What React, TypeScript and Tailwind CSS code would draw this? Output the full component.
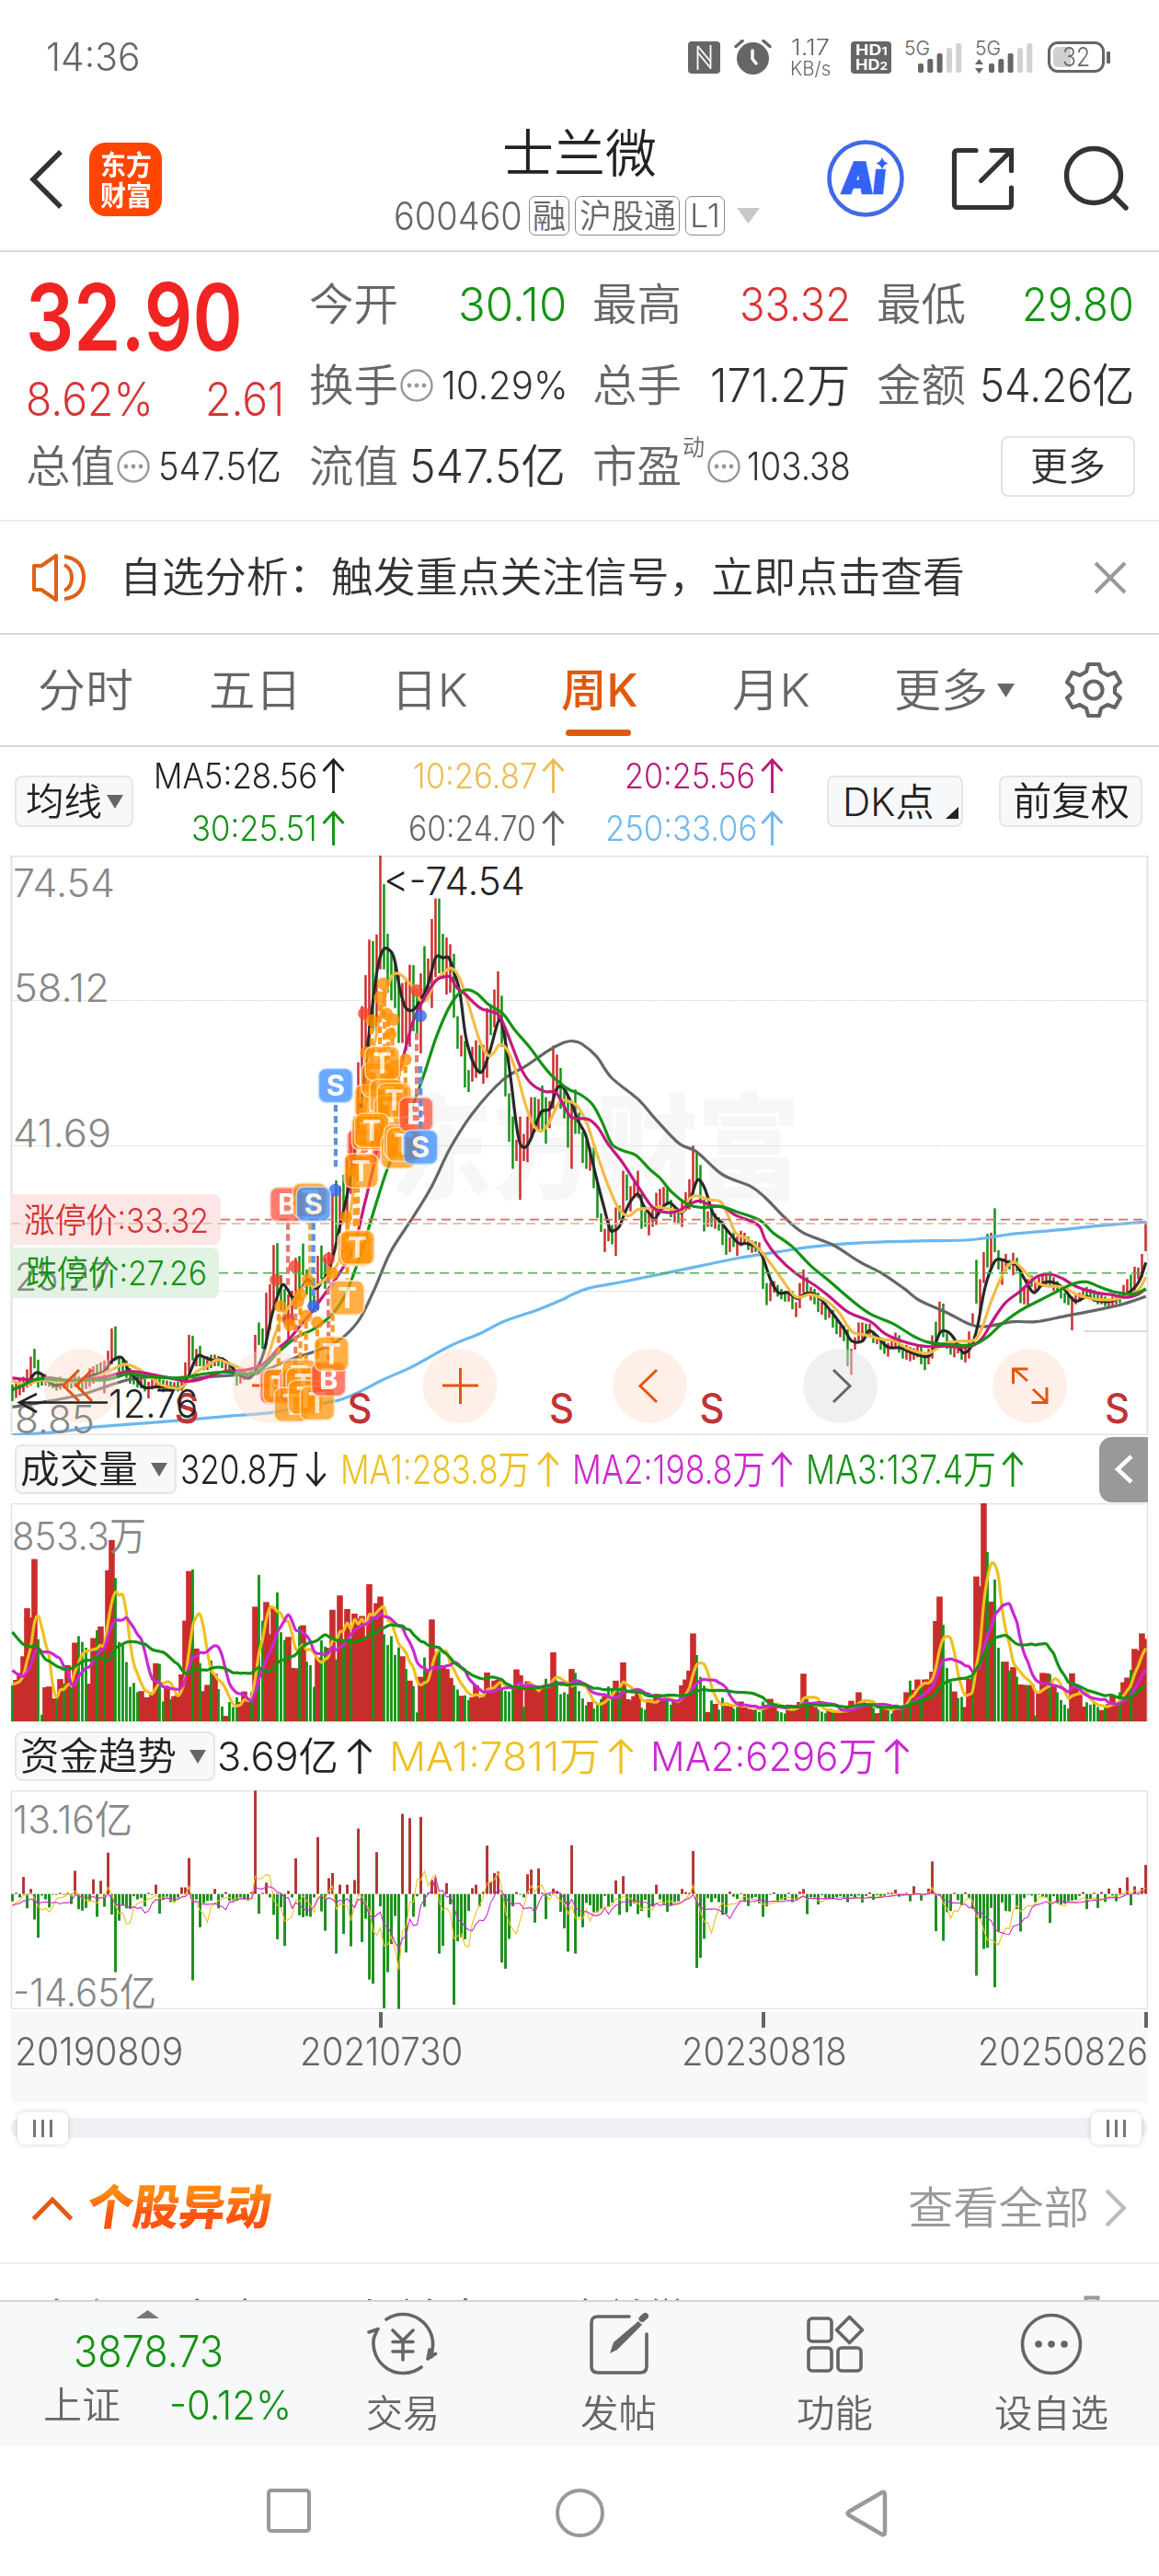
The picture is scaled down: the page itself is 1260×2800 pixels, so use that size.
import { useLayoutEffect, useRef } from "react";
import type { ReactNode } from "react";

const RED = "#cc2f2d";
const GREEN = "#149314";

/* Text squeezed or stretched horizontally so that it fills its box exactly. */
function Fit({ children, className = "", inkClass = "" }: { children: ReactNode; className?: string; inkClass?: string }) {
  const box = useRef<HTMLSpanElement>(null);
  const ink = useRef<HTMLSpanElement>(null);
  useLayoutEffect(() => {
    if (!box.current || !ink.current) return;
    const natural = ink.current.offsetWidth;
    if (natural > 0) ink.current.style.transform = `scaleX(${box.current.clientWidth / natural})`;
  });
  return (
    <span ref={box} className={"block shrink-0 leading-none whitespace-nowrap " + className}>
      <span ref={ink} className={"inline-block origin-left " + inkClass}>
        {children}
      </span>
    </span>
  );
}

/* ---------- chart data ---------- */

const VOLUME =
  "-672 658 640 597 473 497 346 -553 -748 677 675 706 -706 656 -668 620 -677 562 -545 -560 -575 668 550 -530 520 -570 375 297 -395 -560 -568 -612 -676 -666 -690 687 703 703 690 615 -617 -714 677 -708 700 697 644 505 377 -373 577 -615 687 671 -608 642 -682 -727 751 -715 -728 -703 715 688 715 -690 469 -387 -505 457 540 470 -432 -535 -555 547 627 628 -520 517 -611 -620 -676 600 -556 -572 575 477 -605 440 -560 475 -550 487 500 493 556 411 -500 460 443 -540 -568 -545 -594 -574 597 -630 660 -674 -742 650 -600 630 502 590 -580 620 630 653 -672 -683 699 -698 -710 703 672 705 702 639 683 660 658 -680 -686 -688 -680 631 646 -728 662 670 678 690 680 -655 675 587 -660 -695 -690 -695 630 -640 -687 -706 -724 715 -732 -722 -708 700 -675 -680 660 -690 613 708 710 700 690 -730 -735 708 710 694 700 710 -710 -722 712 715 672 657 634 538 -594 -650 -673 741 -711 720 -735 -704 725 727 -732 -728 714 726 733 735 -735 -741 -714 722 707 720 -739 -742 -745 722 724 728 715 642 -707 723 728 -735 -740 -744 733 -742 738 742 740 730 712 722 690 715 718 720 -730 744 -727 732 -730 -745 722 730 -724 690 -660 684 657 -675 657 657 637 506 443 -516 -627 -664 688 -705 -702 728 655 -640 391 416 202 -328 456 -399 -575 -611 611 -634 625 -650 670 671 -672 671 -750 690 640 641 -643 672 -690 -710 -722 -732 641 676 695 727 -716 -722 -718 -728 736 -728 720 700 720 -690 664 652 -632 578 582 538 552"
    .split(" ")
    .map(Number);

const FLOW =
  "1230 1208 1220 1167 1248 1198 1277 1324 1215 1225 1246 1213 1213 1208 1213 1208 1237 1151 1250 1254 1247 1230 1173 1270 1177 1244 1104 1264 1413 1280 1240 1248 1248 1217 1225 1221 1243 1208 1213 1187 1262 1225 1218 1232 1230 1220 1194 1194 1118 1434 1225 1297 1235 1229 1228 1198 1248 1220 1206 1228 1228 1228 1220 1225 1228 1206 944 1262 1208 1182 1220 1265 1328 1245 1345 1203 1220 1119 1266 1271 1268 1270 1220 1064 1256 1306 1170 1157 1365 1187 1314 1187 1346 1175 1042 1335 1275 1432 1443 1103 1243 1506 1413 1340 1268 1508 1004 1362 1015 1270 1217 1012 1244 1208 1175 1170 1365 1345 1183 1238 1497 1333 1322 1328 1255 1196 1187 1243 1205 1086 1180 1157 1153 1388 1404 1327 1243 1206 1213 1220 1160 1148 1285 1145 1208 1276 1215 1197 1203 1257 1300 1360 1085 1365 1270 1297 1234 1240 1258 1258 1250 1216 1243 1233 1176 1265 1165 1258 1243 1236 1263 1255 1226 1272 1243 1187 1225 1237 1257 1240 1232 1230 1198 1206 1208 1100 1402 1376 1327 1222 1232 1222 1232 1265 1262 1205 1218 1224 1209 1228 1242 1222 1219 1235 1270 1243 1213 1207 1228 1226 1226 1208 1232 1226 1205 1198 1263 1220 1220 1238 1214 1222 1222 1222 1220 1216 1220 1232 1217 1222 1215 1233 1216 1207 1226 1214 1219 1216 1208 1208 1200 1218 1215 1208 1230 1191 1209 1228 1213 1197 1127 1307 1216 1332 1258 1255 1208 1227 1240 1207 1222 1250 1422 1275 1353 1350 1247 1452 1308 1233 1255 1256 1213 1250 1308 1222 1213 1215 1232 1213 1218 1220 1286 1217 1235 1238 1236 1230 1228 1226 1216 1206 1250 1224 1208 1247 1206 1231 1197 1215 1230 1195 1213 1168 1240 1191 1213 1195 1136"
    .split(" ")
    .map(Number);

const CANDLES =
  "g1392-1435 r1385-1427 r1380-1420 r1372-1412 r1353-1400 r1320-1395 g1300-1350 g1328-1400 g1370-1395 r1365-1395 g1372-1398 r1372-1402 g1375-1408 r1372-1405 g1378-1402 r1378-1400 g1376-1402 r1367-1398 g1370-1402 g1374-1408 r1372-1404 r1350-1398 r1345-1390 g1340-1380 r1335-1375 r1330-1415 r1305-1360 r1247-1340 g1242-1330 g1318-1360 g1325-1362 g1330-1375 g1350-1390 g1358-1392 g1362-1400 r1372-1402 g1378-1410 r1385-1428 r1370-1405 r1366-1398 g1372-1408 g1380-1412 r1382-1408 g1384-1410 r1386-1408 g1385-1410 r1370-1408 r1335-1395 r1264-1360 g1266-1330 r1300-1345 g1292-1345 g1325-1355 r1320-1355 g1315-1350 r1315-1345 g1318-1345 g1322-1350 r1330-1355 g1335-1358 g1340-1365 g1355-1395 r1358-1390 r1352-1380 r1350-1378 g1350-1375 r1264-1360 g1232-1290 g1247-1300 r1155-1290 r1133-1250 r1032-1200 g1027-1160 g1110-1200 g1145-1225 r1160-1275 r1150-1240 r1065-1190 g1060-1170 g1028-1110 g1095-1160 g1130-1200 g1140-1205 r1060-1200 g1033-1120 g1065-1145 r1050-1130 r900-1060 g865-1020 r880-1000 g850-970 r800-980 r740-900 r700-860 r560-800 r415-700 r335-620 r243-520 g247-480 r230-490 r26-320 g100-320 g228-380 g275-400 g300-420 g330-510 r355-510 r350-530 r308-520 g309-480 g370-500 r330-537 g260-400 r292-380 r190-420 r137-340 g137-330 g228-340 r238-385 r255-380 g280-445 g441-525 r490-545 g505-625 g580-637 r520-610 r503-600 g515-590 r515-615 r420-600 g410-490 r372-470 r325-450 g388-520 g470-648 g640-765 g700-835 r760-815 r700-915 r745-815 r700-818 r650-760 g650-740 r655-735 g620-735 g650-770 r660-730 r517-680 r540-640 g575-680 g620-705 g650-780 r660-835 g630-745 g690-745 g740-820 g760-835 r780-840 g780-885 g870-962 g950-998 r990-1050 r965-1022 g980-1030 r935-1060 g930-965 r840-950 g850-917 r880-945 r870-910 r840-910 g900-990 g945-985 r950-1007 r940-985 r897-980 r887-930 r882-940 g885-930 g915-960 r935-973 g945-975 r920-985 r895-940 r862-940 r775-900 g790-870 g825-925 g915-997 r945-985 g940-985 r950-990 g960-995 g970-1032 g990-1057 r1012-1050 g1000-1037 r1010-1060 r995-1035 r1000-1030 g1010-1045 r1020-1052 g1022-1050 r1025-1060 g1050-1145 g1130-1187 r1130-1177 r1125-1155 g1135-1165 g1145-1172 g1150-1178 r1150-1178 g1150-1198 r1180-1218 r1130-1195 r1095-1155 g1115-1160 r1140-1175 g1145-1185 g1155-1205 r1180-1212 g1180-1225 r1195-1220 g1200-1245 g1225-1262 r1240-1270 g1240-1280 g1250-1345 r1300-1367 r1270-1302 r1232-1285 r1232-1280 g1235-1262 r1235-1270 g1255-1285 r1265-1288 g1270-1302 g1280-1313 r1285-1320 r1275-1300 r1258-1295 g1265-1310 g1290-1325 r1290-1328 r1295-1332 r1298-1328 r1290-1322 g1290-1340 g1315-1355 r1300-1340 r1265-1325 g1230-1290 r1178-1260 g1183-1270 g1260-1300 g1285-1315 r1285-1322 r1285-1312 g1290-1328 r1295-1335 r1255-1325 r1208-1235 g1070-1183 r1120-1210 r1050-1130 g1003-1090 r1000-1090 g937-1050 g1045-1095 r1070-1135 r1055-1100 g1070-1095 r1052-1110 g1065-1100 g1100-1182 r1140-1185 r1120-1187 g1110-1140 r1125-1155 r1115-1145 r1108-1140 r1105-1135 g1100-1140 r1115-1150 g1125-1155 g1140-1170 g1155-1182 g1160-1187 r1165-1252 r1160-1185 r1155-1178 r1145-1170 g1140-1168 g1145-1172 g1148-1178 g1155-1185 r1160-1185 g1165-1190 r1170-1192 r1165-1190 r1160-1185 g1155-1182 r1135-1170 r1120-1160 g1108-1155 r1088-1150 r1090-1120 r1055-1115 r972-1048"
    .split(" ")
    .map((c) => {
      const [hi, lo] = c.slice(1).split("-").map(Number);
      return { up: c[0] === "r", hi, lo };
    });

/* Averages: first part in left-half units, second part in right-half units. */
const AVERAGES: { color: string; left: string; right: string }[] = [
  {
    color: "#6ab8f0",
    left: "33,1522 150,1515 250,1502 370,1493 500,1483 620,1473 720,1465 800,1450 900,1433 960,1410 1020,1380 1100,1345 1200,1292 1280,1260 1340,1230 1430,1200 1500,1172",
    right: "0,1162 50,1143 150,1125 250,1105 350,1085 450,1065 550,1050 640,1037 740,1028 850,1023 950,1021 1070,1018 1180,1003 1300,993 1400,983 1533,972",
  },
  {
    color: "#666666",
    left: "33,1450 100,1440 170,1428 230,1415 290,1395 350,1378 420,1372 490,1378 560,1372 620,1368 680,1365 720,1350 780,1325 830,1310 880,1290 920,1265 960,1220 1000,1140 1040,1050 1100,960 1150,880 1200,780 1260,690 1340,605 1400,570 1460,530 1500,510",
    right: "5,505 30,512 70,545 110,600 180,655 230,710 290,770 335,790 405,850 480,880 520,910 570,960 620,1000 700,1032 770,1075 830,1105 890,1145 930,1175 1000,1205 1060,1235 1100,1243 1180,1230 1240,1230 1320,1215 1400,1200 1470,1185 1533,1165",
  },
  {
    color: "#282828",
    left: "33,1405 60,1395 75,1385 95,1362 115,1368 130,1385 150,1395 180,1385 210,1385 240,1370 275,1360 300,1330 325,1323 345,1360 365,1380 385,1400 420,1398 460,1400 485,1400 500,1375 525,1320 545,1322 570,1330 590,1325 610,1338 635,1365 665,1375 690,1340 705,1300 725,1210 750,1138 765,1145 780,1168 800,1150 820,1120 840,1145 855,1130 875,1100 890,1050 905,985 925,900 945,790 965,640 985,470 1005,320 1022,268 1042,275 1052,300 1065,370 1080,418 1100,425 1120,400 1140,360 1160,290 1180,290 1195,290 1207,320 1225,380 1240,490 1260,560 1283,585 1305,530 1330,450 1345,500 1360,600 1380,750 1397,780 1415,755 1440,690 1465,680 1482,630 1500,625",
    right: "5,670 20,710 40,745 55,800 75,880 90,935 105,990 115,995 130,985 145,950 160,920 180,900 195,930 215,955 225,965 245,935 265,923 285,940 298,948 318,920 335,870 345,865 360,890 380,950 400,972 430,1008 450,1028 470,1028 500,1040 515,1070 535,1125 555,1155 580,1155 605,1170 625,1158 650,1158 670,1175 700,1210 730,1250 750,1280 778,1280 795,1253 815,1265 845,1295 880,1298 915,1312 950,1320 965,1305 985,1258 1003,1255 1020,1270 1040,1303 1052,1310 1070,1290 1085,1240 1105,1140 1130,1075 1150,1070 1170,1078 1190,1085 1210,1120 1235,1155 1260,1130 1285,1128 1310,1140 1345,1177 1375,1165 1400,1175 1440,1177 1480,1160 1505,1140 1520,1115 1533,1077",
  },
  {
    color: "#f4bb45",
    left: "33,1383 70,1392 110,1380 150,1385 200,1385 240,1378 290,1358 330,1340 365,1350 400,1372 430,1393 470,1402 490,1395 520,1362 550,1345 580,1328 610,1338 640,1350 670,1362 690,1355 710,1330 730,1270 750,1220 775,1185 800,1150 820,1130 835,1140 860,1125 885,1100 905,1070 925,1000 940,900 955,800 970,700 985,590 1000,500 1015,430 1030,375 1045,335 1065,332 1085,350 1105,370 1120,400 1140,395 1155,355 1175,335 1200,317 1220,335 1240,385 1260,450 1280,510 1300,542 1315,535 1330,515 1345,520 1360,545 1380,600 1400,670 1420,720 1440,738 1460,720 1480,680 1495,658",
    right: "0,662 20,675 45,720 65,780 90,850 110,900 130,940 155,957 180,940 210,937 240,935 270,940 300,945 315,915 335,905 370,915 400,920 420,955 440,1000 470,1015 500,1040 530,1075 560,1115 600,1165 640,1160 680,1175 715,1205 750,1255 790,1265 830,1275 865,1280 900,1300 950,1312 975,1300 1000,1285 1040,1280 1075,1278 1095,1250 1120,1180 1150,1110 1165,1085 1185,1077 1210,1100 1240,1128 1270,1138 1310,1140 1350,1160 1400,1172 1450,1172 1490,1160 1515,1145 1533,1115",
  },
  {
    color: "#c4187f",
    left: "33,1375 80,1380 130,1375 180,1382 230,1378 270,1375 310,1365 350,1358 400,1365 450,1375 490,1383 520,1382 560,1370 600,1358 650,1355 690,1345 715,1328 740,1300 770,1275 800,1240 830,1205 860,1165 890,1125 920,1080 945,1030 970,930 990,850 1010,760 1040,650 1070,560 1100,455 1130,395 1160,350 1180,340 1200,340 1215,365 1240,385 1280,420 1325,435 1345,470 1365,520 1390,580 1415,615 1450,635 1480,638 1500,670",
    right: "0,700 20,705 50,708 75,730 100,770 140,820 180,880 220,935 260,948 290,942 320,925 345,918 375,930 410,935 440,955 480,970 505,985 520,1020 550,1060 600,1105 650,1135 690,1165 740,1205 800,1230 840,1262 900,1285 950,1294 1000,1293 1060,1295 1095,1275 1130,1220 1160,1180 1200,1150 1240,1115 1275,1107 1310,1118 1350,1140 1400,1155 1440,1160 1480,1167 1510,1160 1533,1145",
  },
  {
    color: "#149314",
    left: "33,1405 60,1395 100,1378 150,1380 280,1380 340,1365 400,1372 480,1375 540,1365 600,1360 660,1365 700,1350 740,1310 790,1270 830,1252 860,1232 890,1205 920,1160 950,1085 975,1010 1000,930 1030,840 1060,770 1100,670 1130,590 1160,500 1190,430 1215,390 1240,373 1270,382 1300,410 1340,435 1370,475 1410,520 1440,560 1470,595 1500,620",
    right: "0,632 30,645 60,670 85,715 110,770 140,788 175,800 210,835 240,860 270,895 310,925 350,935 400,932 440,945 505,968 540,1000 590,1035 640,1085 690,1125 750,1175 800,1210 860,1235 910,1265 950,1282 1000,1288 1070,1290 1110,1270 1150,1235 1200,1200 1250,1175 1300,1150 1340,1132 1375,1127 1410,1140 1450,1153 1500,1158 1533,1145",
  },
];

type Pt = [number, number];
const X = (u: number) => u / 2.45;
const BX = (i: number) => X(33 + 9.8 * i);
const PY = (u: number) => 920 + u / 2.376;
const VY = (u: number) => 1550 + u / 2.376;

function smooth(p: Pt[]): string {
  let d = `M${p[0][0].toFixed(1)} ${p[0][1].toFixed(1)}`;
  for (let i = 0; i < p.length - 1; i++) {
    const a = p[Math.max(0, i - 1)];
    const b = p[i];
    const c = p[i + 1];
    const e = p[Math.min(p.length - 1, i + 2)];
    const n = [b[0] + (c[0] - a[0]) / 6, b[1] + (c[1] - a[1]) / 6, c[0] - (e[0] - b[0]) / 6, c[1] - (e[1] - b[1]) / 6, c[0], c[1]];
    d += "C" + n.map((v) => v.toFixed(1)).join(" ");
  }
  return d;
}

const straight = (p: Pt[]) => "M" + p.map((q) => q[0].toFixed(1) + " " + q[1].toFixed(1)).join("L");

function parse(s: string, dx: number): Pt[] {
  return s.split(" ").map((q) => {
    const [x, y] = q.split(",").map(Number);
    return [X(x + dx), PY(y)] as Pt;
  });
}

function average(values: number[], history: number[], n: number): Pt[] {
  const all = [...history, ...values];
  return values.map((_, i) => {
    const end = i + history.length + 1;
    const s = all.slice(end - n, end).reduce((a, b) => a + b, 0);
    return [BX(i), VY(s / n)] as Pt;
  });
}

const VOL_HISTORY = [...Array(10).fill(420), ...Array(5).fill(580), ...Array(5).fill(668)];
const FLOW_HISTORY = Array(10).fill(1242);

/* ---------- trade markers ---------- */

const MARKS = {
  T: { fill: "#ff9100", edge: "#ffe3bd" },
  B: { fill: "#ff4a33", edge: "#ffd0ca" },
  S: { fill: "#2f86ff", edge: "#bcd8ff" },
};

const MARKERS: ["T" | "B" | "S", number, number][] = [
  ["S", 894, 620], ["B", 765, 927], ["T", 825, 916], ["S", 835, 926],
  ["B", 970, 776], ["T", 962, 840],
  ["T", 990, 662], ["T", 1008, 605], ["T", 1018, 563], ["T", 1030, 648], ["T", 1042, 690], ["T", 1050, 658],
  ["T", 982, 742], ["T", 990, 736], ["T", 1060, 790], ["T", 1068, 765], ["T", 1075, 772],
  ["B", 1108, 694], ["S", 1120, 779],
  ["T", 945, 1042], ["T", 952, 1038], ["T", 925, 1168],
  ["B", 738, 1398], ["T", 746, 1396], ["B", 790, 1398], ["T", 797, 1372], ["T", 808, 1392],
  ["T", 776, 1444], ["T", 813, 1425], ["T", 845, 1440], ["B", 875, 1378], ["T", 883, 1313],
];

const DOTS: [string, number, number][] = [
  ["#f4432f", 735, 1122], ["#f4432f", 785, 1087], ["#f4432f", 875, 1068], ["#f4432f", 970, 434], ["#f4432f", 1110, 375],
  ["#f4432f", 768, 1225],
  ["#3569ee", 835, 1190], ["#3569ee", 893, 890], ["#3569ee", 1120, 440],
  ["#ff9100", 747, 1190], ["#ff9100", 772, 1238], ["#ff9100", 800, 1160], ["#ff9100", 794, 1178], ["#ff9100", 820, 1122],
  ["#ff9100", 845, 1232], ["#ff9100", 815, 1215], ["#ff9100", 885, 1105], ["#ff9100", 922, 960], ["#ff9100", 990, 452],
  ["#ff9100", 1012, 393], ["#ff9100", 1021, 357], ["#ff9100", 1030, 435], ["#ff9100", 1048, 450], ["#ff9100", 1040, 487],
  ["#ff9100", 1080, 553], ["#ff9100", 1060, 570], ["#ff9100", 975, 535], ["#ff9100", 1052, 590], ["#ff9100", 940, 840],
];

const STEMS: [string, number, number, number][] = [
  ["#5b93e0", 894, 670, 830], ["#e77a70", 767, 975, 1135], ["#e8a95c", 826, 975, 1110], ["#5b93e0", 835, 975, 1175],
  ["#e77a70", 1110, 485, 650], ["#ff9a1e", 742, 1210, 1350], ["#e8836f", 787, 1180, 1340], ["#ff9a1e", 800, 1195, 1340],
  ["#ff9a1e", 815, 1230, 1380], ["#ff9a1e", 845, 1250, 1400], ["#e77a70", 875, 1085, 1330], ["#ff9a1e", 886, 1210, 1280],
  ["#ff9a1e", 945, 880, 990], ["#ff9a1e", 953, 850, 990], ["#ff9a1e", 925, 975, 1120], ["#ff9a1e", 990, 470, 640],
  ["#ff9a1e", 1012, 410, 560], ["#ff9a1e", 1024, 370, 560], ["#ff9a1e", 1034, 450, 620], ["#ff9a1e", 1045, 470, 640],
  ["#ff9a1e", 1060, 570, 720], ["#ff9a1e", 1080, 570, 740], ["#ff9a1e", 960, 620, 820],
];

function ChartText({ x, y, w, size = 42, fill = "#888888", children }: { x: number; y: number; w: number; size?: number; fill?: string; children: string }) {
  return (
    <text x={x} y={y} fontSize={size} fill={fill} textLength={w} lengthAdjust="spacingAndGlyphs">
      {children}
    </text>
  );
}

function PriceChart() {
  return (
    <svg className="block h-[630px] w-[1260px]" viewBox="0 931 1260 630">
      <rect x="12.5" y="931.5" width="1235" height="629" fill="none" stroke="#e2e2e2" strokeWidth="2" />
      <text x="424" y="1294" fontSize="124" fontWeight="900" fill="#f7f7f7" textLength="446" lengthAdjust="spacingAndGlyphs">
        东方财富
      </text>
      {[1088.5, 1246.5, 1404.5].map((y) => (
        <line key={y} x1="12" x2="1247" y1={y} y2={y} stroke="#cfcfcf" strokeDasharray="1.5 1.5" />
      ))}
      <line x1="1178" x2="1247" y1="1448" y2="1448" stroke="#cccccc" strokeWidth="1.5" />
      {CANDLES.map((c, i) => (
        <line key={i} x1={BX(i)} x2={BX(i)} y1={PY(c.hi)} y2={PY(c.lo)} stroke={c.up ? RED : GREEN} strokeWidth="2.5" />
      ))}
      {AVERAGES.map((a) => (
        <path key={a.color} d={smooth([...parse(a.left, 0), ...parse(a.right, 1519)])} fill="none" stroke={a.color} strokeWidth="3.2" strokeLinejoin="round" />
      ))}

      <line x1="240" x2="1247" y1="1326.6" y2="1326.6" stroke="#dd6a6a" strokeWidth="1.6" strokeDasharray="10 6" />
      <line x1="12" x2="1247" y1="1331" y2="1331" stroke="#d8b48c" strokeWidth="1.6" strokeDasharray="10 6" />
      <line x1="238" x2="1247" y1="1384.8" y2="1384.8" stroke="#4fae4f" strokeWidth="1.6" strokeDasharray="10 6" />

      {[88, 293, 500, 706.5, 1119.6].map((x) => (
        <circle key={x} cx={x} cy="1507.5" r="40.5" fill="#fcdcc8" fillOpacity="0.42" />
      ))}
      <circle cx="913.5" cy="1507.5" r="40.5" fill="#e2e2e2" fillOpacity="0.5" />
      <g stroke="#e3560f" strokeWidth="3" fill="none">
        <path d="M86 1490L69 1507L86 1524M100 1490L83 1507L100 1524M274 1507H312M481 1507H520M500.5 1488V1527" />
        <path d="M714 1490L696 1507.5L714 1525" />
        <path d="M1117 1502L1102 1488.500M1101.500 1505V1489H1117.500M1123 1511L1137 1524.500M1138 1509V1525.500H1121.500" />
      </g>
      <path d="M906 1490L924 1507.500L906 1525" stroke="#666" strokeWidth="3" fill="none" />

      <path d="M12 1299H233a7 7 0 0 1 7 7V1347a7 7 0 0 1-7 7H12Z" fill="#fde3e3" fillOpacity="0.9" />
      <path d="M12 1357H231a7 7 0 0 1 7 7V1405a7 7 0 0 1-7 7H12Z" fill="#dff2e0" fillOpacity="0.9" />
      <line x1="12" x2="240" y1="1331" y2="1331" stroke="#e2bf9f" strokeWidth="1.6" strokeDasharray="10 6" />
      <ChartText x={14} y={975.5} w={111}>74.54</ChartText>
      <ChartText x={15} y={1090} w={104}>58.12</ChartText>
      <ChartText x={14} y={1248} w={107}>41.69</ChartText>
      <ChartText x={16} y={1404} w={104}>25.27</ChartText>
      <ChartText x={16} y={1559} w={87}>8.85</ChartText>
      <ChartText x={26} y={1341} w={201} size={37} fill="#d23434">涨停价:33.32</ChartText>
      <ChartText x={28} y={1398} w={197} size={37} fill="#109410">跌停价:27.26</ChartText>
      <ChartText x={417} y={973.5} w={154} fill="#222222">&lt;-74.54</ChartText>
      {[203, 391, 610.5, 774, 1214.5].map((x) => (
        <text key={x} x={x} y="1548" fontSize="45" fontWeight="500" fill="#c23434" textAnchor="middle" textLength="27" lengthAdjust="spacingAndGlyphs">
          S
        </text>
      ))}
      <path d="M40 1516L21 1525.500L40 1536M24 1525.500H117" stroke="#222" strokeWidth="2.600" fill="none" />
      <ChartText x={118} y={1541.5} w={97} fill="#222222">12.76</ChartText>

      {STEMS.map(([c, x, a, b], i) => (
        <line key={i} x1={X(x)} x2={X(x)} y1={PY(a)} y2={PY(b)} stroke={c} strokeWidth="4.200" strokeDasharray="7.500 4.500" />
      ))}
      {DOTS.map(([c, x, y], i) => (
        <circle key={i} cx={X(x)} cy={PY(y)} r="6.800" fill={c} fillOpacity="0.8" />
      ))}
      {MARKERS.map(([k, x, y], i) => (
        <g key={i} opacity="0.82">
          <rect x={X(x) - 18.5} y={PY(y) - 18.5} width="37" height="37" rx="8" fill={MARKS[k].fill} fillOpacity="0.88" stroke={MARKS[k].edge} strokeWidth="1.600" />
          <text x={X(x)} y={PY(y) + 11} fontSize="31" fontWeight="700" fill={k === "T" ? "#fff3e0" : "#ffffff"} textAnchor="middle">
            {k}
          </text>
        </g>
      ))}
      <line x1={X(1120)} x2={X(1120)} y1={PY(570)} y2={PY(735)} stroke="#5b93e0" strokeWidth="4.200" strokeDasharray="7.500 4.500" />
    </svg>
  );
}

function VolumeChart() {
  const tops = VOLUME.map(Math.abs);
  return (
    <svg className="block h-[238px] w-[1260px]" viewBox="0 1635 1260 238">
      <rect x="12.500" y="1635.500" width="1235" height="237" fill="none" stroke="#e2e2e2" strokeWidth="1.600" />
      {VOLUME.map((v, i) =>
        v > 0 ? <rect key={i} x={BX(i) - 3.3} width={i === 308 ? 4.5 : 6.6} y={VY(v)} height={1872 - VY(v)} fill="#c92d2b" /> : null,
      )}
      {VOLUME.map((v, i) =>
        v < 0 ? <rect key={i} x={BX(i) - 1.4} width="2.800" y={VY(-v)} height={1872 - VY(-v)} fill={GREEN} /> : null,
      )}
      <path d={smooth(average(tops, VOL_HISTORY, 5))} fill="none" stroke="#f0c01e" strokeWidth="3.200" />
      <path d={smooth(average(tops, VOL_HISTORY, 10))} fill="none" stroke="#cb28d2" strokeWidth="3.200" />
      <path d={smooth(average(tops, VOL_HISTORY, 20))} fill="none" stroke="#149314" strokeWidth="3.200" />
      <ChartText x={13} y={1686} w={146}>853.3万</ChartText>
    </svg>
  );
}

function FlowChart() {
  const zero = VY(1211);
  return (
    <svg className="block h-[238px] w-[1260px]" viewBox="0 1947 1260 238">
      <rect x="12.500" y="1947.500" width="1235" height="237" fill="none" stroke="#e2e2e2" strokeWidth="1.600" />
      {FLOW.map((v, i) => {
        const y = VY(v);
        return <rect key={i} x={BX(i) - 1.4} width="2.900" y={Math.min(y, zero)} height={Math.abs(y - zero)} fill={v < 1211 ? "#b03432" : "#1a8f1a"} />;
      })}
      <path d={straight(average(FLOW, FLOW_HISTORY, 5))} fill="none" stroke="#f0c01e" strokeWidth="1.100" />
      <path d={straight(average(FLOW, FLOW_HISTORY, 10))} fill="none" stroke="#cb28d2" strokeWidth="1.100" />
      <ChartText x={14} y={1994} w={130}>13.16亿</ChartText>
      <ChartText x={14} y={2182} w={156}>-14.65亿</ChartText>
    </svg>
  );
}

/* ---------- small pieces ---------- */

function Caret({ className }: { className: string }) {
  return (
    <svg className={"block shrink-0 " + className} viewBox="0 0 10 10" preserveAspectRatio="none" fill="currentColor">
      <path d="M0 0H10L5 10Z" />
    </svg>
  );
}

function Arrow({ className, down }: { className: string; down?: boolean }) {
  return (
    <svg className={"block h-[38px] shrink-0 " + className} viewBox="0 0 25 38" preserveAspectRatio="none" fill="none" stroke="currentColor" strokeWidth="2.900">
      {down ? <path d="M12.500 0V36M1.500 24L12.500 36L23.500 24" /> : <path d="M12.500 38V2M1.500 14L12.500 2L23.500 14" />}
    </svg>
  );
}

function More({ className = "" }: { className?: string }) {
  return (
    <svg className={"block size-[36px] shrink-0 text-[#999] " + className} viewBox="0 0 36 36" fill="currentColor">
      <circle cx="18" cy="18" r="16.500" fill="none" stroke="currentColor" strokeWidth="2.400" />
      <circle cx="10" cy="18" r="2.400" />
      <circle cx="18" cy="18" r="2.400" />
      <circle cx="26" cy="18" r="2.400" />
    </svg>
  );
}

function Signal({ data, className }: { data?: boolean; className: string }) {
  return (
    <svg className={"block h-[40px] w-[64px] shrink-0 overflow-visible " + className} viewBox="0 0 64 40" fill="#666">
      <text x="0" y="18" fontSize="22" textLength="28" lengthAdjust="spacingAndGlyphs">
        5G
      </text>
      {data && <path d="M0 28L4.500 22L9 28ZM0 32H9L4.500 38Z" />}
      <rect x="15" y="27" width="6" height="10" rx="2" />
      <rect x="25.300" y="22" width="6" height="15" rx="2" />
      <rect x="35.600" y="16" width="6" height="21" rx="2" />
      <rect x="46" y="10" width="6" height="27" rx="2" fill="#d2d2d2" />
      <rect x="56.300" y="5" width="6" height="32" rx="2" fill="#d2d2d2" />
    </svg>
  );
}

function StatusBar() {
  return (
    <div className="flex h-[124px] items-center text-[#666]">
      <Fit className="ml-[50px] w-[103px] text-[42px]">14:36</Fit>
      <svg className="ml-[595px] block h-[35px] w-[35px] shrink-0" viewBox="0 0 35 35">
        <rect width="35" height="35" rx="4" fill="#666" />
        <path d="M10.500 5V31M24.500 4V30" fill="none" stroke="#fff" strokeWidth="1.800" />
        <path d="M10.500 12L24.500 29M10.500 5L24.500 22" fill="none" stroke="#fff" strokeWidth="1.800" />
      </svg>
      <svg className="ml-[15px] block h-[40px] w-[41px] shrink-0" viewBox="0 0 41 40">
        <circle cx="20.500" cy="21.500" r="17.500" fill="#666" />
        <path d="M2 8.500L9 2.500M39 8.500L32 2.500" stroke="#666" strokeWidth="3.500" strokeLinecap="round" />
        <path d="M20 13V22L24 27" fill="none" stroke="#fff" strokeWidth="3.500" strokeLinecap="round" />
      </svg>
      <div className="ml-[20px] flex shrink-0 flex-col">
        <Fit className="ml-[1px] w-[42px] text-[24px]">1.17</Fit>
        <Fit className="w-[44px] text-[21px]">KB/s</Fit>
      </div>
      <div className="ml-[22px] flex h-[35px] w-[44px] shrink-0 flex-col justify-center rounded-[4px] bg-[#666] pl-[5px] font-bold text-white">
        <Fit className="w-[35px] text-[16px]">
          HD<span className="text-[12px]">1</span>
        </Fit>
        <Fit className="w-[35px] text-[16px]">
          HD<span className="text-[12px]">2</span>
        </Fit>
      </div>
      <Signal className="ml-[14px]" />
      <Signal data className="ml-[13px]" />
      <div className="ml-[15px] flex h-[34px] w-[62px] shrink-0 items-center justify-center rounded-[11px] border-[3px] border-[#666] bg-linear-to-r from-[#d0d0d0] from-40% to-white to-40% bg-clip-content p-[3px]">
        <Fit className="w-[30px] text-[28px]">32</Fit>
      </div>
      <div className="ml-[2px] h-[13px] w-[4px] shrink-0 rounded-[1px] bg-[#666]" />
    </div>
  );
}

function Tag({ children, className }: { children: ReactNode; className: string }) {
  return <div className={"flex h-[43px] shrink-0 items-center justify-center rounded-[7px] border-[1.500px] border-[#8a8a8a] " + className}>{children}</div>;
}

function Header() {
  return (
    <header className="flex h-[150px] items-start border-b-2 border-[#d9d9d9]">
      <svg className="mt-[38px] ml-[31px] block h-[66px] w-[39px] shrink-0" viewBox="0 0 39 66">
        <path d="M35 3L5 33L35 63" fill="none" stroke="#333" strokeWidth="5.500" />
      </svg>
      <div className="mt-[31px] ml-[27px] flex h-[80px] w-[79px] shrink-0 flex-col items-center justify-center rounded-[18px] bg-[#ff4500] font-bold text-white">
        <Fit className="w-[56px] text-[30px]">东方</Fit>
        <Fit className="mt-[3px] w-[56px] text-[30px]">财富</Fit>
      </div>
      <div className="ml-[252px] w-[400px] shrink-0">
        <Fit className="mt-[15px] ml-[118px] w-[168px] text-[56px] text-[#222]">士兰微</Fit>
        <div className="mt-[18px] flex items-center text-[#666]">
          <Fit className="w-[140px] text-[42px]">600460</Fit>
          <Tag className="ml-[7px] w-[44px]">
            <Fit className="w-[36px] text-[36px]">融</Fit>
          </Tag>
          <Tag className="ml-[6px] w-[114px]">
            <Fit className="w-[105px] text-[36px]">沪股通</Fit>
          </Tag>
          <Tag className="ml-[6px] w-[43px]">
            <Fit className="w-[33px] text-[35px]">L1</Fit>
          </Tag>
          <Caret className="ml-[13px] h-[17px] w-[25px] text-[#c8c8c8]" />
        </div>
      </div>
      <svg className="mt-[28px] ml-[71px] block h-[84px] w-[84px] shrink-0" viewBox="0 0 84 84">
        <circle cx="42" cy="42" r="39.500" fill="none" stroke="#4069ea" strokeWidth="4.600" />
        <text x="21" y="58" fontSize="46" fontWeight="900" fill="#3563f6" stroke="#3563f6" strokeWidth="2.500" textLength="47" lengthAdjust="spacingAndGlyphs" transform="skewX(-6)">
          Aı
        </text>
        <path d="M60 19Q61.500 24 66.500 25.500Q61.500 27 60 32Q58.500 27 53.500 25.500Q58.500 24 60 19Z" fill="#3563f6" />
      </svg>
      <svg className="mt-[35px] ml-[50px] block h-[72px] w-[72px] shrink-0" viewBox="0 0 72 72" fill="none" stroke="#333" strokeWidth="5.200" strokeLinecap="round">
        <path d="M28 4.500H8Q4.500 4.500 4.500 8V63Q4.500 66.500 8 66.500H63Q66.500 66.500 66.500 63V45M45 4.500H66.500V26.500M66.500 4.500L33.500 37.500" />
      </svg>
      <svg className="mt-[32px] ml-[50px] block h-[76px] w-[76px] shrink-0" viewBox="0 0 76 76" fill="none" stroke="#333" strokeWidth="5.400" strokeLinecap="round">
        <circle cx="34" cy="35" r="29.500" />
        <path d="M56 57L69 70" />
      </svg>
    </header>
  );
}

function Label({ children, className = "" }: { children: ReactNode; className?: string }) {
  return <Fit className={"w-[97px] text-[48px] text-[#666] " + className}>{children}</Fit>;
}

function Quote() {
  return (
    <section className="flex h-[293px] flex-col border-b-2 border-[#ececec] pl-[28px]">
      <div className="flex h-[198px]">
        <div className="w-[308px] shrink-0 text-[#d93434]">
          <Fit className="mt-[20px] w-[236px] text-[101px] font-semibold text-[#f12424]">32.90</Fit>
          <div className="mt-[14px] flex">
            <Fit className="w-[139px] text-[50px]">8.62%</Fit>
            <Fit className="ml-[56px] w-[86px] text-[50px]">2.61</Fit>
          </div>
        </div>
        <div className="flex flex-col pt-[13px] text-[#333]">
          <div className="flex h-[88px] items-center">
            <Label>今开</Label>
            <Fit className="ml-[65px] w-[118px] text-[50px] text-[#149314]">30.10</Fit>
            <Label className="ml-[28px]">最高</Label>
            <Fit className="ml-[63px] w-[121px] text-[50px] text-[#d93434]">33.32</Fit>
            <Label className="ml-[28px]">最低</Label>
            <Fit className="ml-[61px] w-[122px] text-[50px] text-[#149314]">29.80</Fit>
          </div>
          <div className="flex h-[88px] items-center">
            <Label>换手</Label>
            <More className="ml-[2px]" />
            <Fit className="ml-[9px] w-[138px] text-[42px]">10.29%</Fit>
            <Label className="ml-[26px]">总手</Label>
            <Fit className="ml-[31px] w-[152px] text-[50px]">171.2万</Fit>
            <Label className="ml-[29px]">金额</Label>
            <Fit className="ml-[15px] w-[168px] text-[50px]">54.26亿</Fit>
          </div>
        </div>
      </div>
      <div className="flex h-[70px] items-center text-[#333]">
        <Label>总值</Label>
        <More className="ml-[2px]" />
        <Fit className="ml-[9px] w-[134px] text-[42px]">547.5亿</Fit>
        <Label className="ml-[30px]">流值</Label>
        <Fit className="ml-[12px] w-[170px] text-[50px]">547.5亿</Fit>
        <Label className="ml-[29px]">市盈</Label>
        <Fit className="mb-[42px] ml-[1px] w-[24px] text-[25px] text-[#666]">动</Fit>
        <More className="ml-[3px]" />
        <Fit className="ml-[7px] w-[113px] text-[42px]">103.38</Fit>
        <div className="ml-[163px] flex h-[66px] w-[146px] shrink-0 items-center justify-center rounded-[8px] border-2 border-[#e3e3e3]">
          <Fit className="w-[82px] text-[42px]">更多</Fit>
        </div>
      </div>
    </section>
  );
}

function Notice() {
  return (
    <section className="flex h-[123px] items-center border-b-2 border-[#d9d9d9]">
      <svg className="ml-[34px] block h-[54px] w-[62px] shrink-0" viewBox="0 0 62 54" fill="none" stroke="#df6115" strokeWidth="4">
        <path d="M3 14H11L27 3V51L11 40H3Z" strokeLinejoin="round" />
        <path d="M36 13Q44 17 44 27Q44 37 36 41M36 4Q57 7 57 27Q57 47 36 50" />
      </svg>
      <Fit className="ml-[34px] w-[919px] text-[45px] text-[#333]">自选分析：触发重点关注信号，立即点击查看</Fit>
      <svg className="ml-[139px] block size-[38px] shrink-0" viewBox="0 0 38 38">
        <path d="M3 3L35 35M35 3L3 35" stroke="#999" strokeWidth="4" />
      </svg>
    </section>
  );
}

function Tabs() {
  return (
    <nav className="flex h-[122px] items-center border-b-2 border-[#d9d9d9] text-[49px] text-[#666]">
      <Fit className="ml-[41px] w-[104px]">分时</Fit>
      <Fit className="ml-[82px] w-[101px]">五日</Fit>
      <Fit className="ml-[97px] w-[84px]">日K</Fit>
      <div className="relative ml-[101px] text-[#e05a0c]">
        <Fit className="w-[84px] font-medium">周K</Fit>
        <div className="absolute top-[67px] left-[5px] h-[7px] w-[71px] rounded-full bg-[#e05a0c]" />
      </div>
      <Fit className="ml-[102px] w-[85px]">月K</Fit>
      <Fit className="ml-[91px] w-[102px]">更多</Fit>
      <Caret className="ml-[10px] h-[15px] w-[19px]" />
      <svg className="ml-[55px] block h-[62px] w-[62px] shrink-0" viewBox="0 0 62 62" fill="none" stroke="#666" strokeWidth="4.200" strokeLinejoin="round">
        <path d="M25 3H37L39 11L46 15L54 12L60 22.500L54 28V34L60 39.500L54 50L46 47L39 51L37 59H25L23 51L16 47L8 50L2 39.500L8 34V28L2 22.500L8 12L16 15L23 11Z" />
        <circle cx="31" cy="31" r="9.500" />
      </svg>
    </nav>
  );
}

function Averages() {
  return (
    <div className="flex h-[118px] items-center text-[#222]">
      <div className="ml-[16px] flex h-[56px] w-[129px] shrink-0 items-center rounded-[8px] border-2 border-[#e4e6ea] bg-[#f7f8fa]">
        <Fit className="ml-[10px] w-[83px] text-[41px]">均线</Fit>
        <Caret className="ml-[5px] h-[15px] w-[18px] text-[#666]" />
      </div>
      <div className="ml-[22px] flex shrink-0 flex-col gap-[18px] text-[38px]">
        <div className="flex h-[39px] items-center">
          <Fit className="w-[178px]">MA5:28.56</Fit>
          <Arrow className="ml-[5px] w-[25px]" />
          <Fit className="ml-[74px] w-[135px] text-[#eebc50]">10:26.87</Fit>
          <Arrow className="ml-[5px] w-[25px] text-[#eebc50]" />
          <Fit className="ml-[65px] w-[142px] text-[#b91a7d]">20:25.56</Fit>
          <Arrow className="ml-[6px] w-[25px] text-[#b91a7d]" />
        </div>
        <div className="flex h-[39px] items-center">
          <Fit className="ml-[41px] w-[137px] text-[#149314]">30:25.51</Fit>
          <Arrow className="ml-[5px] w-[25px] text-[#149314]" />
          <Fit className="ml-[69px] w-[139px] text-[#666]">60:24.70</Fit>
          <Arrow className="ml-[6px] w-[25px] text-[#666]" />
          <Fit className="ml-[44px] w-[165px] text-[#71b9ea]">250:33.06</Fit>
          <Arrow className="ml-[4px] w-[25px] text-[#71b9ea]" />
        </div>
      </div>
      <div className="ml-[47px] flex h-[56px] w-[148px] shrink-0 items-end rounded-[8px] border-2 border-[#e4e6ea] bg-[#f7f8fa]">
        <Fit className="mb-[4px] ml-[15px] w-[99px] text-[42px]">DK点</Fit>
        <svg className="mb-[7px] ml-[13px] block h-[13px] w-[14px]" viewBox="0 0 14 13">
          <path d="M14 0V13H0Z" fill="#222" />
        </svg>
      </div>
      <div className="ml-[39px] flex h-[56px] w-[156px] shrink-0 items-center justify-center rounded-[8px] border-2 border-[#e4e6ea] bg-[#f7f8fa]">
        <Fit className="w-[127px] text-[42px]">前复权</Fit>
      </div>
    </div>
  );
}

function VolumeBar() {
  return (
    <div className="flex h-[74px] items-center text-[43px] text-[#222]">
      <div className="ml-[16px] flex h-[54px] w-[176px] shrink-0 items-center rounded-[8px] border-2 border-[#e4e6ea] bg-[#f7f8fa]">
        <Fit className="ml-[4px] w-[128px] text-[42px]">成交量</Fit>
        <Caret className="ml-[14px] h-[15px] w-[18px] text-[#666]" />
      </div>
      <Fit className="ml-[4px] w-[129px]">320.8万</Fit>
      <Arrow down className="ml-[7px] w-[23px]" />
      <Fit className="ml-[15px] w-[207px] text-[#eec123]">MA1:283.8万</Fit>
      <Arrow className="ml-[7px] w-[24px] text-[#eec123]" />
      <Fit className="ml-[14px] w-[210px] text-[#cb28d2]">MA2:198.8万</Fit>
      <Arrow className="ml-[6px] w-[24px] text-[#cb28d2]" />
      <Fit className="ml-[14px] w-[207px] text-[#149314]">MA3:137.4万</Fit>
      <Arrow className="ml-[6px] w-[24px] text-[#149314]" />
      <div className="ml-[82px] flex h-[71px] w-[53px] shrink-0 items-center justify-center rounded-l-[14px] bg-[#999]">
        <svg className="block h-[34px] w-[22px]" viewBox="0 0 22 34">
          <path d="M19 3L4 17L19 31" fill="none" stroke="#fff" strokeWidth="4.500" />
        </svg>
      </div>
    </div>
  );
}

function FlowBar() {
  return (
    <div className="flex h-[74px] items-center text-[43px] text-[#222]">
      <div className="ml-[16px] flex h-[54px] w-[218px] shrink-0 items-center rounded-[8px] border-2 border-[#e4e6ea] bg-[#f7f8fa]">
        <Fit className="ml-[4px] w-[170px] text-[42px]">资金趋势</Fit>
        <Caret className="ml-[14px] h-[15px] w-[18px] text-[#666]" />
      </div>
      <Fit className="ml-[2px] w-[132px]">3.69亿</Fit>
      <Arrow className="ml-[9px] w-[28px]" />
      <Fit className="ml-[18px] w-[230px] text-[#eec123]">MA1:7811万</Fit>
      <Arrow className="ml-[8px] w-[28px] text-[#eec123]" />
      <Fit className="ml-[18px] w-[246px] text-[#cb28d2]">MA2:6296万</Fit>
      <Arrow className="ml-[8px] w-[28px] text-[#cb28d2]" />
    </div>
  );
}

function Timeline() {
  return (
    <>
      <div className="mt-[3px] mr-[12px] ml-[12px] h-[98px] bg-[#f8f8fb] text-[42px] text-[#666]">
        <div className="flex h-[17px]">
          <div className="ml-[400px] w-[4px] bg-[#666]" />
          <div className="ml-[412px] w-[4px] bg-[#666]" />
          <div className="ml-[412px] w-[4px] bg-[#666]" />
        </div>
        <div className="mt-[5px] flex">
          <Fit className="ml-[4px] w-[183px]">20190809</Fit>
          <Fit className="ml-[127px] w-[177px]">20210730</Fit>
          <Fit className="ml-[238px] w-[180px]">20230818</Fit>
          <Fit className="ml-[142px] w-[185px]">20250826</Fit>
        </div>
      </div>
      <div className="mx-[12px] flex h-[56px] items-center">
        <div className="flex h-[22px] w-full items-center justify-between rounded-full bg-[#f0f1f4] px-[7px]">
          {[0, 1].map((k) => (
            <div key={k} className="flex h-[35px] w-[55px] items-center justify-center gap-[6px] rounded-[8px] bg-white shadow-[0_0_6px_rgba(0,0,0,0.18)]">
              <i className="h-[19px] w-[3px] bg-[#777]" />
              <i className="h-[19px] w-[3px] bg-[#777]" />
              <i className="h-[19px] w-[3px] bg-[#777]" />
            </div>
          ))}
        </div>
      </div>
    </>
  );
}

function Unusual() {
  return (
    <section className="h-[159px] overflow-hidden">
      <div className="flex h-[120px] items-center border-b-2 border-[#ececec]">
        <svg className="ml-[34px] block h-[30px] w-[46px] shrink-0" viewBox="0 0 46 30">
          <path d="M2.500 27L23 6L43.500 27" fill="none" stroke="#df5c14" strokeWidth="5" />
        </svg>
        <Fit
          className="ml-[15px] w-[200px] -skew-x-8 text-[52px] font-black"
          inkClass="bg-linear-to-b from-[#ff8a12] from-20% to-[#ff5510] to-60% bg-clip-text text-transparent"
        >
          个股异动
        </Fit>
        <Fit className="ml-[692px] w-[197px] text-[48px] text-[#999]">查看全部</Fit>
        <svg className="ml-[15px] block h-[44px] w-[28px] shrink-0" viewBox="0 0 28 44">
          <path d="M4 3L23 22L4 41" fill="none" stroke="#bbb" strokeWidth="4" />
        </svg>
      </div>
      <div className="flex items-start text-[44px] text-[#555]">
        <Fit className="mt-[37px] ml-[38px] w-[92px] text-[#cf5a20]">今六</Fit>
        <Fit className="mt-[37px] ml-[62px] w-[136px]">自选股</Fit>
        <Fit className="mt-[37px] ml-[50px] w-[204px]">上兰全股</Fit>
        <Fit className="mt-[37px] ml-[32px] w-[134px]">士兰微</Fit>
        <svg className="mt-[34px] ml-[430px] block h-[20px] w-[18px] shrink-0" viewBox="0 0 18 20">
          <path d="M2.500 20V2.500H15.500V20" fill="none" stroke="#999" strokeWidth="4" />
        </svg>
      </div>
    </section>
  );
}

function Action({ label, w, children }: { label: string; w: string; children: ReactNode }) {
  return (
    <div className="flex flex-1 flex-col items-center">
      <svg className="mt-[6px] block h-[80px] w-[80px]" viewBox="0 0 80 80" fill="none" stroke="#666" strokeWidth="3.600" strokeLinecap="round">
        {children}
      </svg>
      <Fit className={"mt-[15px] text-[41px] " + w}>{label}</Fit>
    </div>
  );
}

function BottomBar() {
  return (
    <footer className="flex h-[159px] border-t-2 border-[#d3d5d8] bg-[#f7f8fa] text-[#666]">
      <div className="w-[320px] shrink-0">
        <svg className="mt-[9px] ml-[148px] block h-[9px] w-[25px]" viewBox="0 0 25 9">
          <path d="M12.500 0L25 9H0Z" fill="#777" />
        </svg>
        <Fit className="mt-[12px] ml-[80px] w-[163px] text-[48px] text-[#149314]">3878.73</Fit>
        <div className="mt-[12px] flex items-center">
          <Fit className="ml-[47px] w-[84px] text-[41px]">上证</Fit>
          <Fit className="ml-[53px] w-[133px] text-[44px] text-[#149314]">-0.12%</Fit>
        </div>
      </div>
      <Action label="交易" w="w-[80px]">
        <path d="M22 13A32.500 32.500 0 0 1 72 46L71 54M67 56L69 46M67 56L75.500 50.500" />
        <path d="M60 65A32.500 32.500 0 0 1 8.500 33L12.500 23.500M3 27L13 23.500" />
        <path d="M29 25L40 36L51 25M29 37.500H51M29 48H51M40 37V57" />
      </Action>
      <Action label="发帖" w="w-[83px]">
        <path d="M51 10H17Q10 10 10 17V64Q10 71 17 71H63Q70 71 70 64V29" />
        <path d="M30 50L34 38L61 15L65 19L38 46Z" fill="#666" stroke="none" />
        <path d="M65 12.500L68.500 9.500" strokeWidth="7" />
      </Action>
      <Action label="功能" w="w-[83px]">
        <rect x="11" y="12" width="25" height="25" rx="4" />
        <rect x="11" y="44" width="25" height="25" rx="4" />
        <rect x="43" y="44" width="25" height="25" rx="4" />
        <path d="M55.500 10.500L69.500 24.500L55.500 38.500L41.500 24.500Z" strokeLinejoin="round" />
      </Action>
      <Action label="设自选" w="w-[124px]">
        <circle cx="40" cy="40" r="31.500" />
        <path d="M26 40H26.100M40 40H40.100M54 40H54.100" strokeWidth="7.500" />
      </Action>
    </footer>
  );
}

function SystemNav() {
  return (
    <div className="flex h-[140px] pt-[46px]">
      <div className="ml-[290px] h-[48px] w-[48px] rounded-[5px] border-[4px] border-[#999]" />
      <div className="ml-[266px] h-[53px] w-[53px] rounded-full border-[4.500px] border-[#999]" />
      <svg className="ml-[261px] block h-[54px] w-[48px]" viewBox="0 0 48 54">
        <path d="M41 4Q44 3 44 7V47Q44 51 41 50L5 29Q2 27 5 25Z" fill="none" stroke="#999" strokeWidth="4.500" />
      </svg>
    </div>
  );
}

export default function App() {
  return (
    <main className="h-[2800px] w-[1260px] overflow-hidden bg-white font-['Inter','Noto_Sans_CJK_SC',sans-serif] font-[350]">
      <StatusBar />
      <Header />
      <Quote />
      <Notice />
      <Tabs />
      <Averages />
      <PriceChart />
      <VolumeBar />
      <VolumeChart />
      <FlowBar />
      <FlowChart />
      <Timeline />
      <Unusual />
      <BottomBar />
      <SystemNav />
    </main>
  );
}
